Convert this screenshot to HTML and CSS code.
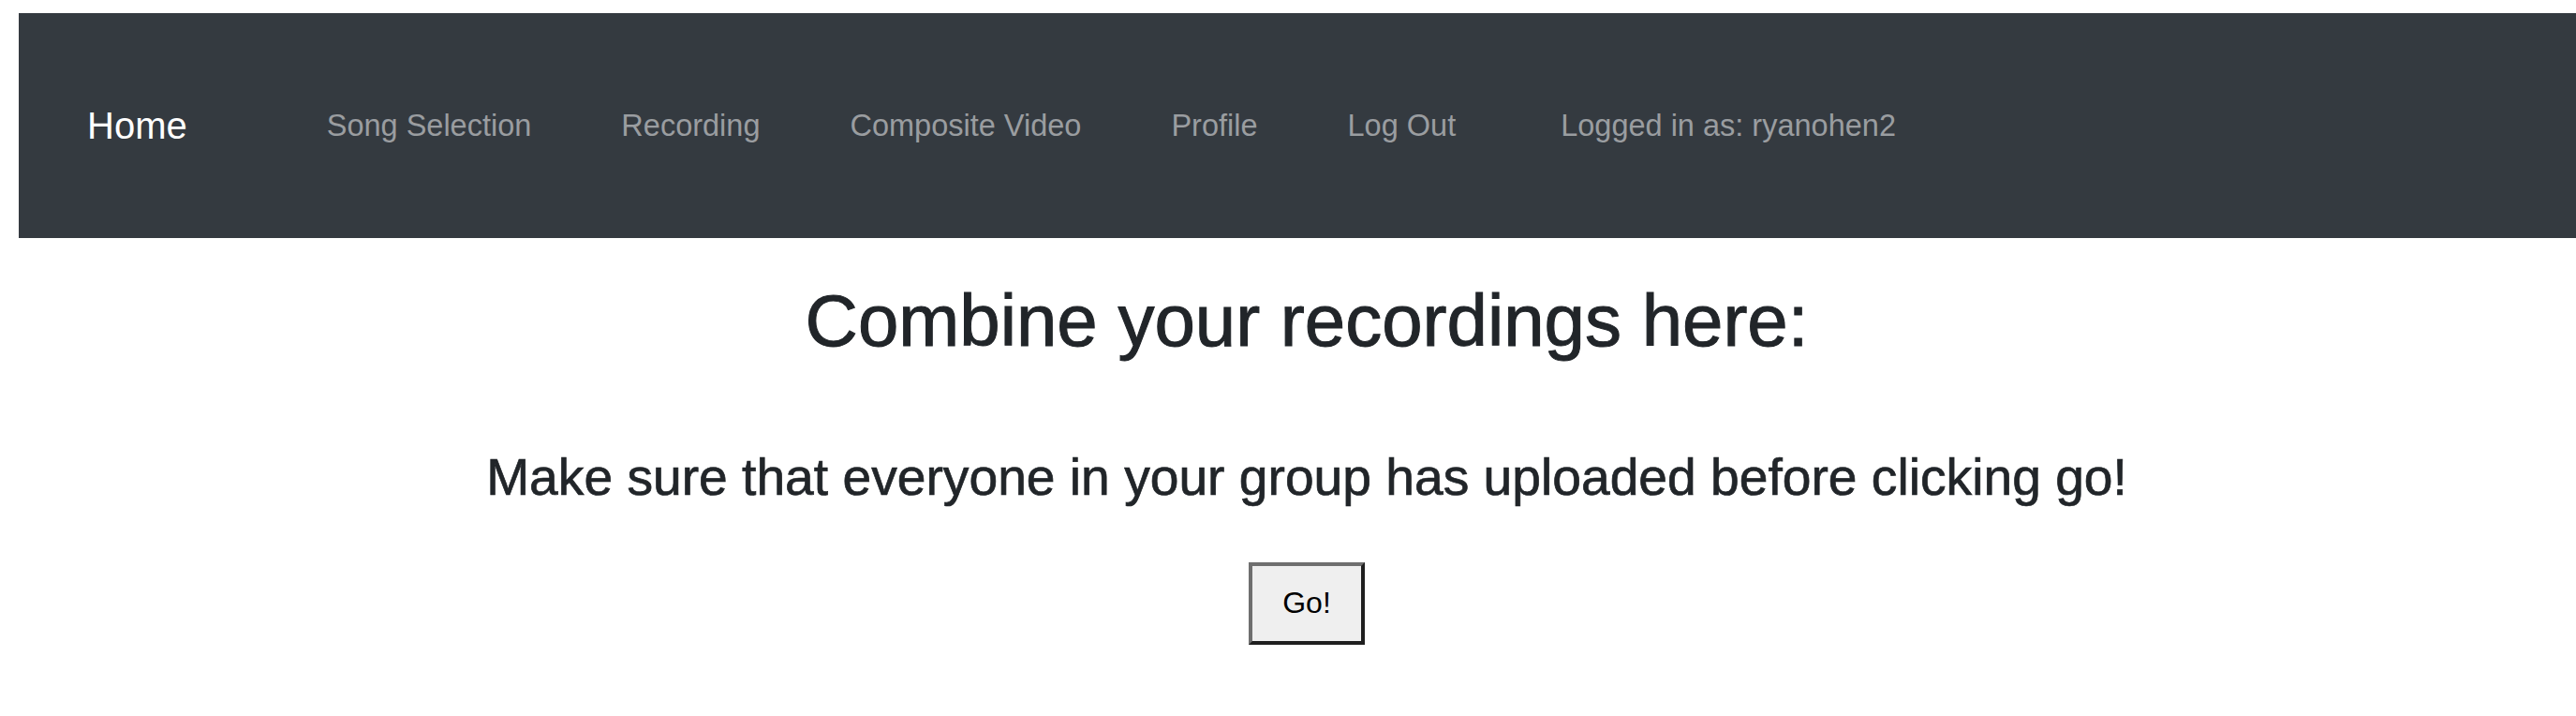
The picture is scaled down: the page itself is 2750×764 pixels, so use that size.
FILE: index.html
```html
<!DOCTYPE html>
<html lang="en">
<head>
<meta charset="utf-8">
<title>Composite Video</title>
<link rel="stylesheet" href="styles.css">
</head>
<body>
<div class="page">
  <nav class="navbar">
    <a class="brand" href="#">Home</a>
    <ul class="nav-links">
      <li><a href="#">Song Selection</a></li>
      <li><a href="#">Recording</a></li>
      <li><a href="#">Composite Video</a></li>
      <li><a href="#">Profile</a></li>
      <li><a href="#">Log Out</a></li>
      <li class="user">Logged in as: ryanohen2</li>
    </ul>
  </nav>
  <main class="content">
    <h1 class="title">Combine your recordings here:</h1>
    <h3 class="subtitle">Make sure that everyone in your group has uploaded before clicking go!</h3>
    <button class="go-btn" type="button">Go!</button>
  </main>
</div>
</body>
</html>
```

FILE: styles.css
```css
html, body {
  overflow: hidden;
}
body {
  margin: 14px 0 0 20px;
  font-family: "Liberation Sans", Arial, sans-serif;
  background: #ffffff;
  color: #212529;
}
.page {
  width: 2750px;
}
.navbar {
  height: 240px;
  background: #343a40;
  display: flex;
  align-items: center;
  padding-left: 73px;
  box-sizing: border-box;
}
.brand {
  color: #ffffff;
  text-decoration: none;
  font-size: 40px;
  margin-right: 149px;
}
.nav-links {
  list-style: none;
  margin: 0;
  padding: 0;
  display: flex;
  gap: 96px;
  font-size: 32.5px;
}
.nav-links a,
.nav-links .user {
  color: #9a9da0;
  text-decoration: none;
}
.nav-links .user {
  margin-left: 16px;
}
.content {
  display: flex;
  flex-direction: column;
  align-items: center;
  text-align: center;
}
.title {
  font-size: 78px;
  font-weight: 500;
  line-height: 1.2;
  margin: 42px 0 0;
  -webkit-text-stroke: 1px currentColor;
}
.subtitle {
  font-size: 55.2px;
  font-weight: 500;
  line-height: 1.2;
  margin: 86px 0 0;
  -webkit-text-stroke: 0.7px currentColor;
}
.go-btn {
  margin-top: 58px;
  width: 124px;
  height: 88px;
  box-sizing: border-box;
  background: #efefef;
  border-style: solid;
  border-width: 4px;
  border-color: #6f6f6f #1f1f1f #1f1f1f #6f6f6f;
  font-family: "Liberation Sans", Arial, sans-serif;
  font-size: 32px;
  color: #000000;
  padding: 0;
}
```
